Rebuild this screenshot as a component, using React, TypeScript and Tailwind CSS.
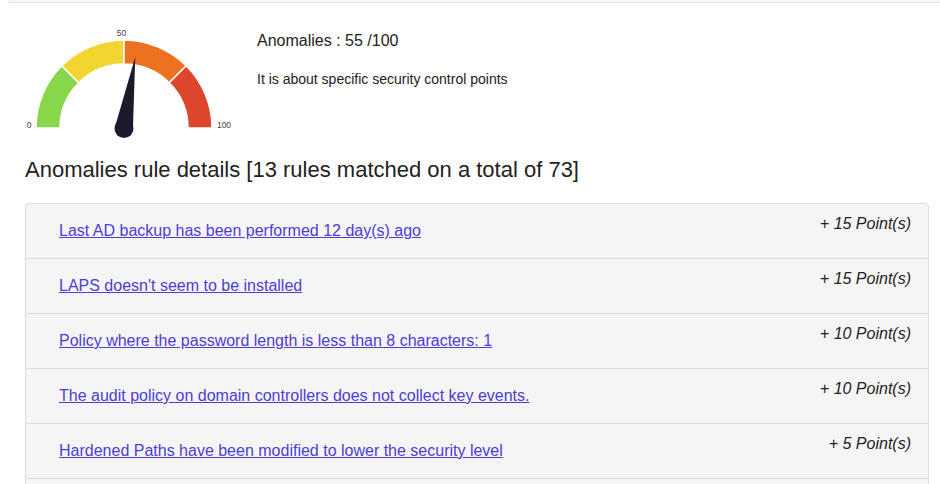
import React from 'react';

const rules = [
  { label: 'Last AD backup has been performed 12 day(s) ago', points: 15 },
  { label: "LAPS doesn't seem to be installed", points: 15 },
  { label: 'Policy where the password length is less than 8 characters: 1', points: 10 },
  { label: 'The audit policy on domain controllers does not collect key events.', points: 10 },
  { label: 'Hardened Paths have been modified to lower the security level', points: 5 },
];

const CX = 124;
const CY = 125;
const R_OUT = 88;
const R_IN = 64;

const pt = (t: number, r: number) => {
  const a = Math.PI * (1 - t);
  return [CX + r * Math.cos(a), CY - r * Math.sin(a)];
};

const arc = (from: number, to: number) => {
  const [x1, y1] = pt(from, R_OUT);
  const [x2, y2] = pt(to, R_OUT);
  const [x3, y3] = pt(to, R_IN);
  const [x4, y4] = pt(from, R_IN);
  return `M${x1} ${y1} A${R_OUT} ${R_OUT} 0 0 1 ${x2} ${y2} L${x3} ${y3} A${R_IN} ${R_IN} 0 0 0 ${x4} ${y4} Z`;
};

const Gauge = ({ value }: { value: number }) => {
  const t = value / 100;
  const a = Math.PI * (1 - t);
  const tip = [CX + 72 * Math.cos(a), CY - 72 * Math.sin(a)];
  const px = Math.sin(a) * 9;
  const py = Math.cos(a) * 9;
  const segments = [
    { from: 0, to: 0.25, color: '#88d64a' },
    { from: 0.25, to: 0.5, color: '#f3d531' },
    { from: 0.5, to: 0.75, color: '#ed7120' },
    { from: 0.75, to: 1, color: '#dd452d' },
  ];
  return (
    <svg width="245" height="142" className="shrink-0">
      {segments.map((s) => (
        <path key={s.from} d={arc(s.from, s.to)} fill={s.color} stroke="#fff" strokeWidth="1.5" />
      ))}
      <path
        d={`M${CX - px} ${CY - py} L${tip[0]} ${tip[1]} L${CX + px} ${CY + py} Z`}
        fill="#1d1a2b"
      />
      <circle cx={CX} cy={CY + 0.5} r="9.5" fill="#1d1a2b" />
      <g fontFamily="'Liberation Sans', Arial, sans-serif" fontSize="8.5" fill="#444">
        <text x="29" y="125" textAnchor="middle">0</text>
        <text x="121.5" y="33" textAnchor="middle">50</text>
        <text x="224" y="125" textAnchor="middle">100</text>
      </g>
    </svg>
  );
};

export default function App() {
  return (
    <div className="w-[940px] h-[484px] overflow-hidden bg-white font-['Liberation_Sans',Arial,sans-serif] text-[#222]">
      <div className="ml-[9px] h-[3px] bg-[#f7f7f4] border-l border-b border-[#e4e4df]" />
      <div className="flex">
        <Gauge value={55} />
        <div className="ml-[12px] pt-[26px]">
          <p className="text-[16px] leading-[24px]">Anomalies : 55 /100</p>
          <p className="mt-[16px] text-[14px] leading-[20px]">It is about specific security control points</p>
        </div>
      </div>
      <h2 className="ml-[25px] mt-[11px] text-[22px] leading-[28px]">
        Anomalies rule details [13 rules matched on a total of 73]
      </h2>
      <div className="mr-[11px] ml-[25px] mt-[19px] border border-[#dcdcdc] rounded-[4px] bg-[#f5f5f5]">
        {rules.map((r) => (
          <div key={r.label} className="flex h-[55px] border-b border-[#dcdcdc] pl-[33px] pr-[17px]">
            <a href="#" className="mt-[16px] h-fit text-[16px] leading-[22px] text-[#4d3dd6] underline">
              {r.label}
            </a>
            <span className="ml-auto mt-[9px] h-fit text-[16px] leading-[22px] italic text-[#222]">
              + {r.points} Point(s)
            </span>
          </div>
        ))}
        <div className="h-[55px]" />
      </div>
    </div>
  );
}
